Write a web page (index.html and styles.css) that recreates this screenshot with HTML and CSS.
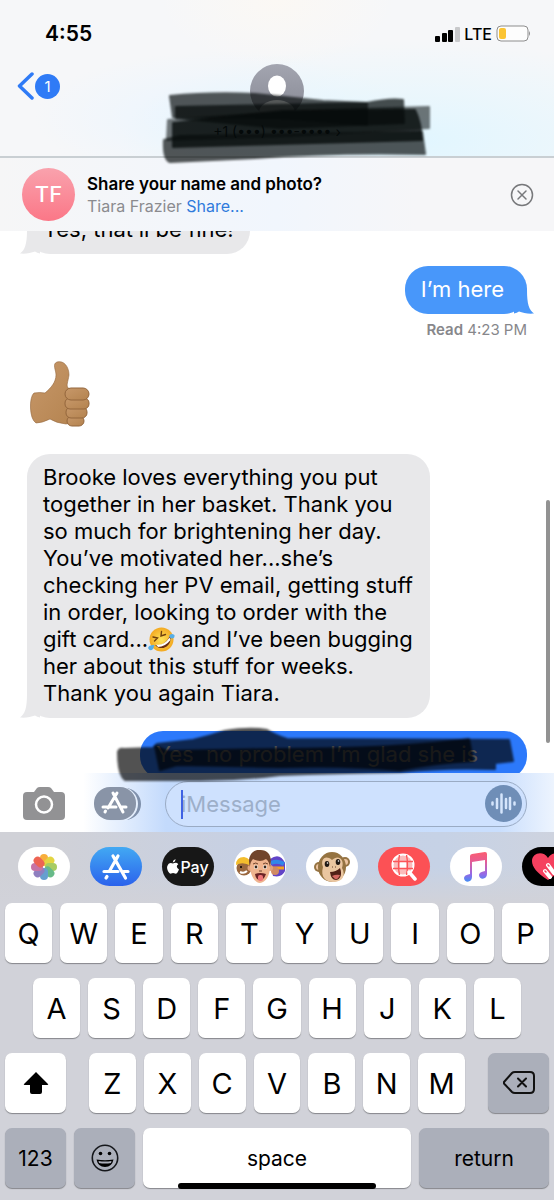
FILE: index.html
```html
<!DOCTYPE html>
<html lang="en">
<head>
  <meta charset="UTF-8" />
  <meta name="viewport" content="width=device-width, initial-scale=1.0"/>
  <title>Messages</title>
  <link rel="stylesheet" href="styles.css">
</head>
<body>
  <div class="phone">
    <header class="top">
      <div class="status">
        <span class="time">4:55</span>
        <div class="status-right">
          <svg width="25" height="16" viewBox="0 0 25 16">
            <rect x="0" y="10" width="5" height="6" rx="1"/>
            <rect x="7" y="7" width="5" height="9" rx="1"/>
            <rect x="13" y="4" width="5" height="12" rx="1"/>
            <rect x="20" y="1" width="5" height="15" rx="1" fill="#c8c9cb"/>
          </svg>
          <span class="lte">LTE</span>
          <svg width="35" height="18" viewBox="0 0 35 18">
            <rect x="1" y="1" width="31" height="15" rx="4" fill="#fdfdfd" stroke="#8d8d8d"/>
            <rect x="3" y="3" width="7" height="11" rx="2" fill="#fbc433"/>
            <path d="M33 6 Q35 8.500 33 11Z" fill="#8d8d8d"/>
          </svg>
        </div>
      </div>
      <div class="contact-row">
        <a href="#" class="back" aria-label="Back">
          <svg width="17" height="28" viewBox="0 0 17 28"><path d="M15 2 L2.500 14 L15 26" fill="none" stroke="#2f7bf6" stroke-width="3.500" stroke-linecap="round" stroke-linejoin="round"/></svg>
          <span class="count">1</span>
        </a>
        <div class="contact">
          <svg width="54" height="54" viewBox="0 0 54 54">
            <defs>
              <linearGradient id="grey" x1="0" y1="0" x2="0" y2="1"><stop offset="0" stop-color="#a3a5b0"/><stop offset="1" stop-color="#868893"/></linearGradient>
              <clipPath id="round"><circle cx="27" cy="27" r="27"/></clipPath>
            </defs>
            <circle cx="27" cy="27" r="27" fill="url(#grey)"/>
            <g clip-path="url(#round)" fill="#fff"><ellipse cx="27" cy="22" rx="9" ry="10.500"/><ellipse cx="27" cy="49" rx="18" ry="13"/></g>
          </svg>
          <span class="number">+1 (•••) •••-•••• ›</span>
          <svg class="scribble" width="275" height="76" viewBox="0 0 275 76">
            <g fill="#050a0a" stroke="#050a0a" stroke-width="2" stroke-linejoin="round">
              <path opacity=".68" d="M10 6 Q50 2 95 4 L163 11 L207 13 V35 L120 28 L13 27Z"/>
              <path opacity=".72" d="M16 17 L207 13 Q230 8 243 10 L244 33 L120 38 L16 28Z"/>
              <path opacity=".55" d="M8 30 Q130 20 269 17 V38 L130 46 L7 50Z"/>
              <path opacity=".8" d="M13 33 L123 21 L255 20 Q261 32 262 50 L13 57Z"/>
              <path opacity=".68" d="M4 50 L20 46 L262 42 L265 64 Q170 62 95 68 L10 72 Q3 70 4 50Z"/>
            </g>
          </svg>
        </div>
      </div>
    </header>

    <section class="banner">
      <span class="initials">TF</span>
      <div class="banner-text">
        <strong>Share your name and photo?</strong>
        <span>Tiara Frazier <a href="#">Share...</a></span>
      </div>
      <button class="close" aria-label="Close">
        <svg width="24" height="24" viewBox="0 0 24 24" fill="none" stroke="#77787b" stroke-width="1.500" stroke-linecap="round"><circle cx="12" cy="12" r="10.500"/><path d="M8 8 L16 16 M16 8 L8 16"/></svg>
      </button>
    </section>

    <main class="chat">
      <div class="bubble received">Yes, that’ll be fine!
        <svg class="tail" width="20" height="24" viewBox="0 0 20 24"><path d="M7 0 C7 14 5 20 0 23.500 C6 24 11 23 15 21.500 Q17 23 20 23.500 V0Z"/></svg>
      </div>
      <div class="bubble sent">I’m here
        <svg class="tail" width="20" height="24" viewBox="0 0 20 24"><path d="M13 0 C13 14 15 20 20 23.500 C14 24 9 23 5 21.500 Q3 23 0 23.500 V0Z"/></svg>
      </div>
      <p class="read"><b>Read</b> 4:23 PM</p>
      <svg class="thumb" width="62" height="66" viewBox="0 0 62 66" role="img" aria-label="Thumbs up">
        <defs><linearGradient id="skin" x1="0" y1="0" x2="1" y2="1"><stop offset="0" stop-color="#c7986a"/><stop offset="1" stop-color="#b4834f"/></linearGradient></defs>
        <g fill="url(#skin)" stroke="#94663c">
          <path stroke-width=".6" d="M4 32 Q10 31 15 32 C21 27 26 21 26 14 C26 9 22 3 27 1 C34 -1 39 6 39 14 C38 21 36 24 38 27 L48 31 L46 61 L36 63 Q26 62 20 58 Q12 62 6 62 C-1 58 -1 36 4 32Z"/>
          <g stroke-width="1">
            <rect x="37" y="55" width="17" height="10" rx="5"/>
            <rect x="36" y="46" width="21" height="11" rx="5"/>
            <rect x="35" y="37" width="24" height="11" rx="5"/>
            <rect x="35" y="27" width="24" height="12" rx="6"/>
          </g>
        </g>
      </svg>
      <div class="bubble received long">Brooke loves everything you put<br>together in her basket. Thank you<br>so much for brightening her day.<br>You’ve motivated her...she’s<br>checking her PV email, getting stuff<br>in order, looking to order with the<br>gift card...<svg class="rofl" width="27" height="25" viewBox="0 0 27 25" role="img" aria-label="Rolling on the floor laughing">
          <defs><radialGradient id="face"><stop offset="0" stop-color="#ffe45a"/><stop offset="1" stop-color="#f3a921"/></radialGradient></defs>
          <circle cx="13.500" cy="12.500" r="12" fill="url(#face)"/>
          <path d="M7 18 Q16 20 22 9 C25 17 15 26 7 18Z" fill="#6a2c13"/>
          <path d="M8 17.500 Q16 19 21.500 10.500 L22.500 13 Q17 20 10 20Z" fill="#fff"/>
          <path d="M5 10 L9.500 11 L6.500 14 M13.500 4.500 L13 9 L17.500 7.500" fill="none" stroke="#70400e" stroke-width="1.400" stroke-linecap="round"/>
          <path d="M6.500 18 Q1 17.500 0 21 Q2 25 5 22Z M21 9 Q23 5.500 26.500 8 Q27 12 23 11.500Z" fill="#55aee8"/>
        </svg> and I’ve been bugging<br>her about this stuff for weeks.<br>Thank you again Tiara.
        <svg class="tail" width="20" height="24" viewBox="0 0 20 24"><path d="M7 0 C7 14 5 20 0 23.500 C6 24 11 23 15 21.500 Q17 23 20 23.500 V0Z"/></svg>
      </div>
      <div class="bubble sent last">Yes&nbsp; no problem I’m glad she is</div>
      <div class="scrollbar"></div>
    </main>

    <form class="compose">
      <svg class="scribble" width="405" height="57" viewBox="0 0 405 57">
        <g fill="#000" stroke="#000" stroke-width="2" stroke-linejoin="round">
          <path opacity=".68" d="M3 25 Q4 21 9 22 L38 21 L42 17 L78 13 Q95 9 110 4 Q135 0 152 3 Q160 8 172 12 L394 13 L398 34 L380 36 V42 Q330 40 285 45 Q220 46 165 48 Q125 53 85 53 H10 Q3 48 3 25Z"/>
          <path opacity=".7" d="M40 19 L52 24 L165 22 Q280 22 354 12 L358 34 Q320 36 285 43 Q230 38 165 40 L62 38 L45 43Z"/>
        </g>
      </svg>
      <button type="button" aria-label="Camera">
        <svg width="42" height="33" viewBox="0 0 42 33"><path fill="#929294" d="M4 5 H11 L14 1 Q15 0 17 0 H25 Q27 0 28 1 L31 5 H38 Q42 5 42 9 V29 Q42 33 38 33 H4 Q0 33 0 29 V9 Q0 5 4 5Z"/><circle cx="21" cy="17.500" r="8" fill="none" stroke="#fff" stroke-width="2.500"/></svg>
      </button>
      <button type="button" aria-label="Apps">
        <svg width="48" height="34" viewBox="0 0 48 34">
          <rect x="6" y="1" width="41" height="32" rx="16" fill="#7f90ab"/>
          <rect x="3" y="0" width="41" height="34" rx="17" fill="#e4eefc"/>
          <rect x="0" y="0" width="42" height="33" rx="16" fill="#8994a7"/>
          <g stroke="#fff" stroke-width="3" stroke-linecap="round" fill="none"><path d="M19 6 L29 25 M23 6 L14 21 M9 20 H22 M27 20 H32 M11 25 L11.500 24"/></g>
        </svg>
      </button>
      <div class="field">
        <input type="text" placeholder="iMessage" aria-label="iMessage">
        <span class="cursor"></span>
        <button type="button" aria-label="Record audio">
          <svg width="37" height="37" viewBox="0 0 37 37"><circle cx="18.500" cy="18.500" r="18.500" fill="#6f8eb7"/><g stroke="#d5e5fc" stroke-width="2.500" stroke-linecap="round"><path d="M7.500 17.500 V19.500 M12 14 V23 M16.500 9.500 V27.500 M21 14 V23 M25 13 V24 M29.500 17.500 V19.500"/></g></svg>
        </button>
      </div>
    </form>

    <nav class="apps">
      <a href="#" class="pill" aria-label="Photos">
        <svg width="28" height="28" viewBox="-14 -14 28 28"><g opacity=".85">
          <rect x="-4" y="-13" width="8" height="12" rx="4" fill="#f7a11a"/>
          <rect x="-4" y="-13" width="8" height="12" rx="4" fill="#dfce22" transform="rotate(45)"/>
          <rect x="-4" y="-13" width="8" height="12" rx="4" fill="#99c447" transform="rotate(90)"/>
          <rect x="-4" y="-13" width="8" height="12" rx="4" fill="#4daf75" transform="rotate(135)"/>
          <rect x="-4" y="-13" width="8" height="12" rx="4" fill="#4c8fc7" transform="rotate(180)"/>
          <rect x="-4" y="-13" width="8" height="12" rx="4" fill="#7c69b5" transform="rotate(225)"/>
          <rect x="-4" y="-13" width="8" height="12" rx="4" fill="#bd5c96" transform="rotate(270)"/>
          <rect x="-4" y="-13" width="8" height="12" rx="4" fill="#ea4a36" transform="rotate(315)"/>
        </g></svg>
      </a>
      <a href="#" class="pill store" aria-label="App Store">
        <svg width="28" height="28" viewBox="0 0 28 28" fill="none" stroke="#fff" stroke-width="3.200" stroke-linecap="round"><path d="M11 3 L23.500 25 M16 3 L7.500 18 M2 18.500 H16 M21.500 18.500 H26 M4 25 L5 23.500"/></svg>
      </a>
      <a href="#" class="pill pay" aria-label="Apple Pay">
        <svg width="12" height="15" viewBox="0 0 12 15" fill="#fff"><path d="M8.500 0 Q8.500 3 5.700 3.500 Q5.700 1 8.500 0Z M6 4.500 Q9.500 2.700 11.300 5.200 Q8 7.500 12 10.500 Q10 15.500 8 14.600 Q6 13.600 4.200 14.600 C2 15.400 -.5 10.500 .2 7.500 Q1.700 2.800 6 4.500Z"/></svg>
        <span>Pay</span>
      </a>
      <a href="#" class="pill" aria-label="Memoji">
        <svg width="52" height="39" viewBox="0 0 52 39">
          <circle cx="10" cy="21" r="7.500" fill="#9a673e"/><path d="M2 18 Q2 10 10 10 Q17 11 17 19 Q9 14 2 18Z" fill="#f3bd2d"/><path d="M6 25 Q10 27 13 24" stroke="#fff" stroke-width="2" fill="none"/><circle cx="7" cy="20" r="1"/>
          <path d="M36 12 Q46 5 51 16 V24 Q48 31 39 29Z" fill="#6244c7"/><path d="M37 16 Q44 13 50 17" stroke="#3287e8" stroke-width="4" fill="none"/><path d="M38 21 H50" stroke="#f7a21d" stroke-width="3"/><circle cx="41" cy="24" r="4" fill="#d18a63"/>
          <circle cx="16.500" cy="21" r="3" fill="#e2a37c"/><circle cx="36" cy="21" r="3" fill="#e2a37c"/>
          <path d="M16 15 Q17 8 26 8 Q36 8 36 16 C37 27 32 36 26 36 C20 36 15 26 16 15Z" fill="#efb48f"/>
          <path d="M16 20 C13 11 17 3 25 3 C34 2 39 9 36 20 Q35 14 32 12 Q26 16 19 12 Q16 15 16 20Z" fill="#71452c"/>
          <circle cx="22" cy="20" r="2" fill="#fff"/><circle cx="31" cy="20" r="2" fill="#fff"/><circle cx="22" cy="20" r="1.400" fill="#392519"/><circle cx="31" cy="20" r="1.400" fill="#392519"/>
          <path d="M19 17 Q22 15 24 17 M29 17 Q31 15 34 17 M25 24 H28" stroke="#70452e" fill="none"/>
          <path d="M21 27 Q26 25 32 27 Q30 33 26 33 Q22 33 21 27Z" fill="#6b2326"/><rect x="24" y="28" width="5" height="6" rx="2" fill="#ee7478"/>
        </svg>
      </a>
      <a href="#" class="pill" aria-label="Animoji">
        <svg width="36" height="34" viewBox="0 0 36 34">
          <circle cx="5" cy="17" r="5" fill="#967444"/><circle cx="31" cy="12" r="5" fill="#967444"/><circle cx="5" cy="17" r="3" fill="#edc5a1"/><circle cx="31" cy="12" r="3" fill="#edc5a1"/>
          <ellipse cx="18" cy="17" rx="14" ry="15" fill="#957341"/>
          <path d="M18 10 C11 4 6 10 9 17 C6 27 12 32 19 32 C29 32 32 25 28 18 C31 9 24 4 18 10Z" fill="#eac6a0"/>
          <ellipse cx="13" cy="14" rx="2.300" ry="3" fill="#1e1713"/><ellipse cx="24" cy="12" rx="2.300" ry="3" fill="#1e1713"/><circle cx="13.500" cy="13" r=".8" fill="#fff"/><circle cx="24.500" cy="11" r=".8" fill="#fff"/>
          <path d="M18 17 H19 M21 17 H22" stroke="#65422c"/>
          <path d="M16 22 Q22 22 26 18 C29 26 25 30 22 30 Q17 30 16 22Z" fill="#512016"/><path d="M18 26 Q22 24 26 25 Q24 30 21 29Z" fill="#d36760"/>
        </svg>
      </a>
      <a href="#" class="pill search" aria-label="Images">
        <svg width="28" height="28" viewBox="0 0 28 28">
          <circle cx="13" cy="12" r="10.500" fill="#fbbcbc" stroke="#fff" stroke-width="2"/><rect x="10" y="9" width="6" height="6" fill="#fff"/>
          <path d="M3 8.500 H23 M3 15.500 H23 M9.500 2 Q7.500 12 9.500 22 M16.500 2 Q18.500 12 16.500 22" fill="none" stroke="#fc5558" stroke-width="1.300"/>
          <path d="M19 19 L25 26" stroke="#fff" stroke-width="3.500" stroke-linecap="round"/>
        </svg>
      </a>
      <a href="#" class="pill" aria-label="Music">
        <svg width="24" height="30" viewBox="0 0 24 30">
          <defs><linearGradient id="note" x1="0" y1="0" x2="0" y2="1"><stop offset="0" stop-color="#fb5d70"/><stop offset=".3" stop-color="#e85c91"/><stop offset=".75" stop-color="#9469e7"/><stop offset="1" stop-color="#438df4"/></linearGradient></defs>
          <path fill="url(#note)" d="M6 4 Q6 2.500 8 2 L21 0 Q23 0 23 2 V22 C23 28 15 28 15 23 Q15 20 21 19 V8 L8 10 V25 C8 31 0 31 0 26 Q0 23 6 22Z"/>
        </svg>
      </a>
      <a href="#" class="pill touch" aria-label="Digital Touch">
        <svg width="32" height="28" viewBox="0 0 32 28"><path fill="#f5405f" d="M16 27 C5 20 0 14 0 8 C0 0 11 -3 16 5 C21 -3 32 0 32 8 C32 14 27 20 16 27Z"/><path d="M13 18 L18 24 M16 12 L22 20" stroke="#fff" stroke-width="4" stroke-linecap="round"/><path d="M13 18 L14 19 M16 12 L17 13" stroke="#f5405f" stroke-width="1.500" stroke-linecap="round"/></svg>
      </a>
    </nav>

    <div class="keyboard">
      <div class="row">
        <button>Q</button><button>W</button><button>E</button><button>R</button><button>T</button><button>Y</button><button>U</button><button>I</button><button>O</button><button>P</button>
      </div>
      <div class="row middle">
        <button>A</button><button>S</button><button>D</button><button>F</button><button>G</button><button>H</button><button>J</button><button>K</button><button>L</button>
      </div>
      <div class="row third">
        <button class="wide" aria-label="Shift">
          <svg width="26" height="23" viewBox="0 0 26 23"><path d="M13 0 L25 12 Q26 13 24 13 H19 V20 Q19 22 17 22 H9 Q7 22 7 20 V13 H2 Q0 13 1 12Z"/></svg>
        </button>
        <div class="row letters">
          <button>Z</button><button>X</button><button>C</button><button>V</button><button>B</button><button>N</button><button>M</button>
        </div>
        <button class="wide dark" aria-label="Delete">
          <svg width="32" height="24" viewBox="0 0 32 24" fill="none" stroke="#111" stroke-width="2" stroke-linecap="round" stroke-linejoin="round"><path d="M12 1 H27 Q31 1 31 5 V18 Q31 22 27 22 H12 Q10 22 9 21 L1 12.500 Q1 11.500 1 11 L9 2 Q10 1 12 1Z M15 7.500 L23 15.500 M23 7.500 L15 15.500"/></svg>
        </button>
      </div>
      <div class="row">
        <button class="wide dark word">123</button>
        <button class="wide dark" aria-label="Emoji">
          <svg width="28" height="28" viewBox="0 0 28 28"><circle cx="14" cy="14" r="12.700" fill="none" stroke="#15171b" stroke-width="1.600"/><circle cx="9.500" cy="9.500" r="1.800"/><circle cx="18.500" cy="9.500" r="1.800"/><path d="M5.500 15.500 Q14 17 22.500 15.500 Q21 23 14 23 Q7 23 5.500 15.500Z"/><path d="M7.500 17 Q14 18.200 20.500 17 L20 19 Q14 20 8 19Z" fill="#adb0bb"/></svg>
        </button>
        <button class="space word">space</button>
        <button class="return dark word">return</button>
      </div>
      <div class="home-bar"></div>
    </div>
  </div>
</body>
</html>
```
FILE: styles.css
```css
* {
  box-sizing: border-box;
}
body {
  margin: 0;
  font-family: Inter, "Liberation Sans", sans-serif;
  background: #fff;
  color: #000;
}
button {
  padding: 0;
  border: none;
  background: none;
  font-family: inherit;
  color: inherit;
  cursor: pointer;
}
a {
  color: #2f7bdc;
  text-decoration: none;
}
svg {
  display: block;
}
.phone {
  display: flex;
  flex-direction: column;
  height: 100vh;
  overflow: hidden;
}
.scribble {
  position: absolute;
  filter: blur(1px);
  pointer-events: none;
  z-index: 2;
}

/* header */
.top {
  height: 158px;
  border-bottom: 2px solid #c9cfd3;
  background:
    radial-gradient(ellipse at 75% 90%, #e1f6ff 0, rgba(225, 246, 255, 0) 50%),
    radial-gradient(ellipse at 40% 75%, #eaf5ff 0, rgba(234, 245, 255, 0) 40%),
    radial-gradient(ellipse at 50% 0, #fbf8f4 0, rgba(251, 248, 244, 0) 30%),
    #f6f7f9;
}
.status {
  display: flex;
  justify-content: space-between;
  align-items: center;
  height: 64px;
  padding: 3px 23px 0 45px;
}
.time {
  font-size: 21px;
  font-weight: 600;
}
.status-right {
  display: flex;
  align-items: center;
  gap: 4px;
}
.lte {
  font-size: 16px;
  font-weight: 500;
}
.contact-row {
  display: grid;
  grid-template-columns: 1fr auto 1fr;
  padding: 0 17px;
}
.back {
  display: flex;
  align-items: center;
  gap: 1px;
  height: 44px;
}
.count {
  width: 25px;
  height: 25px;
  border-radius: 50%;
  background: #2f7bf6;
  color: #fff;
  font-size: 15px;
  line-height: 25px;
  text-align: center;
}
.contact {
  position: relative;
  display: flex;
  flex-direction: column;
  align-items: center;
  width: 160px;
}
.contact .scribble {
  left: 50%;
  top: 26px;
  margin-left: -117px;
}
.number {
  font-size: 14px;
  line-height: 28px;
}

/* share banner */
.banner {
  display: flex;
  align-items: center;
  gap: 12px;
  height: 73px;
  padding: 0 20px 0 22px;
  background: linear-gradient(to right, #f6f6f7, #f1f6fd 50%, #f6f6f8 75%);
}
.initials {
  width: 53px;
  height: 53px;
  border-radius: 50%;
  background: linear-gradient(#f9a2ad, #fb7787);
  color: #fff;
  font-size: 22px;
  font-weight: 500;
  line-height: 53px;
  text-align: center;
}
.banner-text {
  flex: 1;
  display: flex;
  flex-direction: column;
  font-size: 16px;
  line-height: 22px;
  color: #8b8b8f;
}
.banner-text strong {
  font-size: 17px;
  font-weight: 600;
  color: #000;
}

/* messages */
.chat {
  position: relative;
  flex: 1;
  min-height: 0;
  display: flex;
  flex-direction: column;
  justify-content: flex-end;
  align-items: flex-start;
  padding: 0 27px;
  overflow: hidden;
}
.bubble {
  position: relative;
  flex: none;
  padding: 10px 16px 11px;
  border-radius: 23px;
  font-size: 22px;
  line-height: 27px;
  white-space: nowrap;
}
.received {
  background: #e8e8ea;
}
.sent {
  align-self: flex-end;
  margin-top: 12px;
  padding-right: 23px;
  background: #4897fa;
  color: #fff;
}
.long {
  min-width: 403px;
}
.last {
  min-width: 387px;
  margin: 13px 0 -6px;
  background: #2c79fb;
}
.tail {
  position: absolute;
  bottom: 0;
  fill: #e8e8ea;
}
.received .tail {
  left: -7px;
}
.sent .tail {
  right: -7px;
  fill: #4897fa;
}
.read {
  align-self: flex-end;
  margin: 6px 0 0;
  font-size: 15px;
  line-height: 20px;
  color: #87878b;
}
.read b {
  font-weight: 600;
}
.thumb {
  flex: none;
  margin: 21px 0 27px 3px;
}
.rofl {
  display: inline-block;
  vertical-align: -5px;
}
.scrollbar {
  position: absolute;
  right: 4px;
  bottom: 30px;
  width: 4px;
  height: 243px;
  border-radius: 2px;
  background: #929292;
}

/* compose bar */
.compose {
  position: relative;
  display: flex;
  align-items: center;
  gap: 29px;
  height: 59px;
  padding: 2px 27px 0 23px;
  background: linear-gradient(to right, #fff 15%, #c3dafc 30%, #c9defd 80%, #c9defd 90%, #edf4fe);
}
.compose .scribble {
  left: 115px;
  top: -46px;
}
.field {
  position: relative;
  flex: 1;
  min-width: 0;
  display: flex;
  align-items: center;
  height: 46px;
  margin-left: -6px;
  padding: 0 4px 0 15px;
  border: 1px solid #9aabc4;
  border-radius: 23px;
  background: #cee1fe;
}
.field input {
  flex: 1;
  min-width: 0;
  padding: 0;
  border: none;
  background: none;
  outline: none;
  font-family: inherit;
  font-size: 22px;
}
.field input::placeholder {
  color: #9dafc9;
}
.cursor {
  position: absolute;
  left: 15px;
  top: 8px;
  width: 2px;
  height: 29px;
  background: #3f62e4;
}

/* app strip */
.apps {
  display: flex;
  gap: 20px;
  height: 71px;
  padding: 15px 0 0 18px;
  overflow: hidden;
  background:
    linear-gradient(rgba(209, 210, 217, 0) 50%, #d1d2d9),
    linear-gradient(to right, #d0d1d7 10%, #c5d0e6 50%, #c6d2e6 80%, #ced3df);
}
.pill {
  flex: none;
  display: flex;
  align-items: center;
  justify-content: center;
  width: 52px;
  height: 39px;
  border-radius: 20px;
  background: #fff;
  overflow: hidden;
}
.store {
  background: linear-gradient(#42a9f3, #2b62ec);
}
.pay {
  gap: 1px;
  background: #171717;
  color: #fff;
  font-size: 16px;
  font-weight: 500;
}
.search {
  background: #fc5155;
}
.touch {
  background: #000;
}

/* keyboard */
.keyboard {
  position: relative;
  display: flex;
  flex-direction: column;
  gap: 15px;
  padding: 0 5px 12px;
  background: #d1d2d9;
}
.row {
  display: flex;
  gap: 8px;
}
.row button {
  flex: 1;
  display: flex;
  align-items: center;
  justify-content: center;
  height: 60px;
  border-radius: 7px;
  background: #fff;
  box-shadow: 0 1px 1px #85868b;
  font-size: 29px;
}
.middle {
  padding: 0 28px;
}
.third {
  gap: 23px;
}
.letters {
  flex: 1;
}
.row .wide {
  flex: 0 0 61px;
}
.row .dark {
  background: #abafba;
}
.row .word {
  font-size: 21px;
}
.row .return {
  flex: 0 0 130px;
}
.home-bar {
  position: absolute;
  left: 50%;
  bottom: 11px;
  width: 198px;
  height: 6px;
  margin-left: -99px;
  border-radius: 3px;
  background: #000;
}
```
